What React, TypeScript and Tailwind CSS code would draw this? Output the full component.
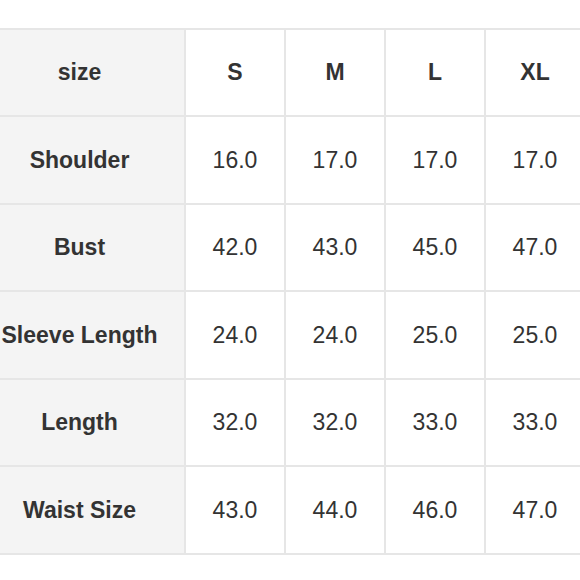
import React from 'react'

const sizes = ['S', 'M', 'L', 'XL']

const rows = [
  { name: 'Shoulder', values: ['16.0', '17.0', '17.0', '17.0'] },
  { name: 'Bust', values: ['42.0', '43.0', '45.0', '47.0'] },
  { name: 'Sleeve Length', values: ['24.0', '24.0', '25.0', '25.0'] },
  { name: 'Length', values: ['32.0', '32.0', '33.0', '33.0'] },
  { name: 'Waist Size', values: ['43.0', '44.0', '46.0', '47.0'] },
]

// row heights alternate so the lines land on whole pixels
const heights = ['h-[87px]', 'h-[88px]', 'h-[87px]', 'h-[88px]', 'h-[87px]', 'h-[88px]']

const cell = 'flex items-center justify-center border-r-2 border-b-2 border-[#e6e6e6] text-[23px] leading-none text-[#333]'

const App = () => {
  return (
    <div
      className="w-[580px] h-[580px] overflow-hidden bg-white"
      style={{ fontFamily: '"Liberation Sans", Arial, sans-serif' }}
    >
      <div className="mt-[28px] -ml-[27px] grid w-[613px] grid-cols-[211px_100px_100px_100px_100px] border-t-2 border-l-2 border-[#e6e6e6]">
        <div className={`${cell} ${heights[0]} bg-[#f4f4f4] font-bold`}>size</div>
        {sizes.map((s) => (
          <div key={s} className={`${cell} ${heights[0]} font-bold`}>
            {s}
          </div>
        ))}
        {rows.map((r, i) => (
          <React.Fragment key={r.name}>
            <div className={`${cell} ${heights[i + 1]} bg-[#f4f4f4] font-bold whitespace-nowrap`}>{r.name}</div>
            {r.values.map((v, j) => (
              <div key={j} className={`${cell} ${heights[i + 1]}`}>
                {v}
              </div>
            ))}
          </React.Fragment>
        ))}
      </div>
    </div>
  )
}

export default App
